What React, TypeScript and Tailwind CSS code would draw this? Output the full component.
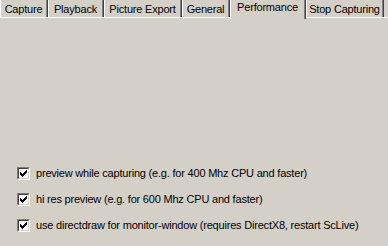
import React from "react";

const tabs = [
  { label: "Capture", w: "w-[48px]" },
  { label: "Playback", w: "w-[56px]" },
  { label: "Picture Export", w: "w-[78px]" },
  { label: "General", w: "w-[48px]" },
  { label: "Performance", w: "w-[76px]", active: true },
  { label: "Stop Capturing", w: "w-[78px]" },
];

const options = [
  "preview while capturing (e.g. for 400 Mhz CPU and faster)",
  "hi res preview (e.g. for 600 Mhz CPU and faster)",
  "use directdraw for monitor-window (requires DirectX8, restart ScLive)",
];

const CheckBox = () => {
  return (
    <div className="w-[13px] h-[13px] shrink-0 border-t border-l border-t-[#808080] border-l-[#808080] border-b border-r border-b-white border-r-white">
      <div className="w-full h-full bg-white border-t border-l border-t-[#404040] border-l-[#404040] border-b border-r border-b-[#d4d0c8] border-r-[#d4d0c8]">
        <svg width="9" height="9" viewBox="0 0 9 9" shapeRendering="crispEdges">
          <polygon points="1,3 3,5 8,0 8,3 3,8 1,6" fill="#000" />
        </svg>
      </div>
    </div>
  );
};

export default function App() {
  return (
    <div
      className="w-[388px] h-[246px] bg-[#d4d0c8] overflow-hidden flex flex-col text-[11px] tracking-[-0.2px] text-black"
      style={{ fontFamily: '"Liberation Sans", Arial, sans-serif' }}
    >
      {/* tab strip */}
      <div className="flex h-[17px] shrink-0">
        {tabs.map((t) =>
          t.active ? (
            <div
              key={t.label}
              className={`${t.w} h-[19px] relative z-10 bg-[#d4d0c8] border-r border-r-[#404040]`}
            >
              <div className="h-full flex justify-center pt-[1px] border-l border-l-white border-r border-r-[#808080]">
                <span className="leading-[13px]">{t.label}</span>
              </div>
            </div>
          ) : (
            <div key={t.label} className={`${t.w} h-[17px] border-r border-r-[#404040]`}>
              <div className="h-full flex justify-center pt-[3px] border-l border-l-white border-r border-r-[#808080]">
                <span className="leading-[13px]">{t.label}</span>
              </div>
            </div>
          )
        )}
      </div>

      {/* panel */}
      <div className="flex-1 flex flex-col justify-end gap-[13px] pb-[14px] pl-[17px] border-t border-t-white">
        {options.map((o) => (
          <label key={o} className="flex items-center gap-[6px] h-[13px]">
            <CheckBox />
            <span className="leading-[13px] whitespace-nowrap">{o}</span>
          </label>
        ))}
      </div>
    </div>
  );
}
